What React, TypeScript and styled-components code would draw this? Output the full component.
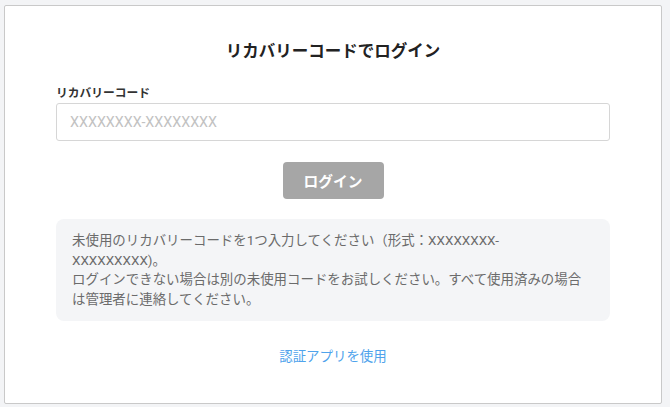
import React from "react";
import styled, { createGlobalStyle } from "styled-components";

const GlobalStyle = createGlobalStyle`
  html, body {
    margin: 0;
    padding: 0;
    background: #f3f4f6;
  }
  body {
    font-family: Roboto, "Noto Sans CJK JP", sans-serif;
    padding: 5px 8px 3px 4px;
  }
  * { box-sizing: border-box; }
`;

const Card = styled.div`
  background: #ffffff;
  border: 1px solid #c9c9c9;
  border-radius: 2px;
  padding: 34px 51px 36px;
  display: flex;
  flex-direction: column;
`;

const Title = styled.h1`
  margin: 0 0 20px;
  font-size: 16.5px;
  line-height: 24px;
  font-weight: 700;
  color: #222222;
  text-align: center;
`;

const Field = styled.div`
  display: flex;
  flex-direction: column;
  gap: 1px;
`;

const Label = styled.label`
  font-size: 11.75px;
  line-height: 18px;
  font-weight: 700;
  color: #333333;
`;

const Input = styled.input`
  height: 38px;
  width: 100%;
  border: 1px solid #d6d6d6;
  border-radius: 3px;
  padding: 0 13px;
  font-family: inherit;
  font-size: 14.3px;
  color: #333;
  background: #fff;
  outline: none;
  &::placeholder {
    color: #c2c2c2;
  }
`;

const ButtonRow = styled.div`
  display: flex;
  justify-content: center;
  margin-top: 21px;
`;

const Button = styled.button<{ $disabled?: boolean }>`
  width: 101px;
  height: 37px;
  border: none;
  border-radius: 4px;
  background: ${(p) => (p.$disabled ? "#a6a6a6" : "#4a90e2")};
  color: #ffffff;
  font-family: inherit;
  font-size: 14.7px;
  font-weight: 700;
  cursor: ${(p) => (p.$disabled ? "default" : "pointer")};
`;

const InfoBox = styled.div`
  margin-top: 20px;
  background: #f4f5f7;
  border-radius: 8px;
  padding: 12px 24px 12px 16px;
  font-size: 13.45px;
  line-height: 19.5px;
  color: #6b6b6b;
`;

const LinkRow = styled.div`
  display: flex;
  justify-content: center;
  margin-top: 26px;
`;

const TextLink = styled.a`
  font-size: 13.45px;
  line-height: 20px;
  color: #4fa3ec;
  text-decoration: none;
  cursor: pointer;
`;

export default function App() {
  return (
    <>
      <GlobalStyle />
      <Card>
        <Title>リカバリーコードでログイン</Title>
        <Field>
          <Label>リカバリーコード</Label>
          <Input placeholder="XXXXXXXX-XXXXXXXX" />
        </Field>
        <ButtonRow>
          <Button $disabled disabled>
            ログイン
          </Button>
        </ButtonRow>
        <InfoBox>
          未使用のリカバリーコードを1つ入力してください（形式：XXXXXXXX-XXXXXXXXX)。
          <br />
          ログインできない場合は別の未使用コードをお試しください。すべて使用済みの場合は管理者に連絡してください。
        </InfoBox>
        <LinkRow>
          <TextLink>認証アプリを使用</TextLink>
        </LinkRow>
      </Card>
    </>
  );
}
